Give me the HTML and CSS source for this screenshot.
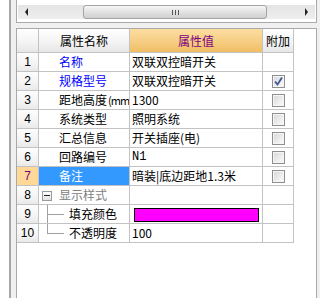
FILE: index.html
```html
<!DOCTYPE html>
<html lang="zh">
<head>
    <meta charset="UTF-8">
    <title>属性</title>
    <link rel="stylesheet" href="styles.css">
</head>
<body>

<div class="frame">
    <div class="toppanel">
        <div class="hscroll">
            <span class="arrow arrow-left"></span>
            <div class="track">
                <div class="thumb"><span class="grip"></span></div>
            </div>
            <span class="arrow arrow-right"></span>
        </div>
    </div>

    <div class="gridpanel">
        <table class="props">
            <colgroup>
                <col class="c-num">
                <col class="c-name">
                <col class="c-val">
                <col class="c-add">
            </colgroup>
            <thead>
                <tr>
                    <th class="num"></th>
                    <th>属性名称</th>
                    <th class="sel">属性值</th>
                    <th>附加</th>
                </tr>
            </thead>
            <tbody>
                <tr>
                    <td class="num">1</td>
                    <td class="name link">名称</td>
                    <td class="val">双联双控暗开关</td>
                    <td class="add"></td>
                </tr>
                <tr>
                    <td class="num">2</td>
                    <td class="name link">规格型号</td>
                    <td class="val">双联双控暗开关</td>
                    <td class="add"><span class="chk checked"><svg width="11" height="11" viewBox="0 0 11 11"><path d="M2 5.5 L4.5 8.5 L9 1.5" fill="none" stroke="#3f5796" stroke-width="1.8"/></svg></span></td>
                </tr>
                <tr>
                    <td class="num">3</td>
                    <td class="name">距地高度<span class="unit">(mm</span></td>
                    <td class="val">1300</td>
                    <td class="add"><span class="chk"></span></td>
                </tr>
                <tr>
                    <td class="num">4</td>
                    <td class="name">系统类型</td>
                    <td class="val">照明系统</td>
                    <td class="add"><span class="chk"></span></td>
                </tr>
                <tr>
                    <td class="num">5</td>
                    <td class="name">汇总信息</td>
                    <td class="val">开关插座(电)</td>
                    <td class="add"><span class="chk"></span></td>
                </tr>
                <tr>
                    <td class="num">6</td>
                    <td class="name">回路编号</td>
                    <td class="val mono">N1</td>
                    <td class="add"><span class="chk"></span></td>
                </tr>
                <tr class="current">
                    <td class="num">7</td>
                    <td class="name">备注</td>
                    <td class="val">暗装|底边距地1.3米</td>
                    <td class="add"><span class="chk"></span></td>
                </tr>
                <tr>
                    <td class="num">8</td>
                    <td class="name group"><span class="minus"></span>显示样式</td>
                    <td class="val"></td>
                    <td class="add"></td>
                </tr>
                <tr>
                    <td class="num">9</td>
                    <td class="name child"><span class="elbow"></span>填充颜色</td>
                    <td class="val"><span class="swatch"></span></td>
                    <td class="add"></td>
                </tr>
                <tr>
                    <td class="num">10</td>
                    <td class="name child"><span class="elbow last"></span>不透明度</td>
                    <td class="val">100</td>
                    <td class="add"></td>
                </tr>
            </tbody>
        </table>
    </div>
</div>

</body>
</html>
```

FILE: styles.css
```css
body {
    margin: 0;
    background: #fff;
    overflow: hidden;
    font-family: "Noto Sans CJK SC", sans-serif;
    font-size: 12px;
    color: #000;
}
.frame {
    margin-left: 9px;
    height: 299px;
    border-left: 2px solid #a7a7a7;
    background: #f0f0f0;
    padding: 0 3px 0 5px;
}
.toppanel {
    margin-top: -1px;
    margin-bottom: 5px;
    height: 22px;
    border: 1px solid #a9a9a9;
    background: #fff;
}
.hscroll {
    display: flex;
    align-items: center;
    margin: 5px 1px 0;
    height: 14px;
    background: linear-gradient(#e4e4e4, #eeeeee);
}
.arrow {
    width: 0;
    height: 0;
    border-top: 4px solid transparent;
    border-bottom: 4px solid transparent;
}
.arrow-left {
    margin: 0 6px 0 7px;
    border-right: 3px solid #222;
}
.arrow-right {
    margin: 0 7px 0 6px;
    border-left: 3px solid #222;
}
.track {
    flex: 1;
    height: 14px;
    padding-left: 49px;
    padding-right: 32px;
}
.thumb {
    height: 12px;
    border: 1px solid #a4a4a4;
    border-radius: 3px;
    background: linear-gradient(#f6f6f6, #dedede 60%, #d0d0d0);
    display: flex;
    justify-content: center;
    align-items: center;
}
.grip {
    width: 5px;
    height: 5px;
    border-left: 1px solid #555;
    border-right: 1px solid #555;
    background: linear-gradient(#555, #555) center / 1px 100% no-repeat;
}
.gridpanel {
    height: 280px;
    border: 1px solid #a9a9a9;
    background: #fff;
}
.props {
    border-collapse: separate;
    border-spacing: 0;
    table-layout: fixed;
    width: 277px;
}
.c-num { width: 22px; }
.c-name { width: 91px; }
.c-val { width: 133px; }
.c-add { width: 31px; }
.props th,
.props td {
    padding: 0;
    border-right: 1px solid #c3c3c3;
    border-bottom: 1px solid #c3c3c3;
    white-space: nowrap;
    overflow: hidden;
    line-height: 18px;
}
.props thead tr {
    height: 24px;
}
.props tbody tr {
    height: 19px;
}
.props th {
    font-weight: normal;
    background: linear-gradient(#ffffff, #f3f3f3 60%, #e6e6e6);
    text-align: center;
}
.props th.sel {
    background: linear-gradient(#fcdea2, #f5cc80 60%, #f0bd63);
    color: #800080;
}
.props td.num {
    text-align: center;
    font-family: "Liberation Sans", sans-serif;
    background: linear-gradient(#fdfdfd, #f4f4f4 60%, #e9e9e9);
}
.name {
    padding-left: 20px !important;
}
.name.link {
    color: #0000ff;
}
.unit {
    margin-left: 1px;
    font-size: 11px;
    letter-spacing: -1px;
}
.val {
    padding-left: 2px !important;
}
.val.mono {
    font-family: "Liberation Mono", monospace;
}
.add {
    text-align: center;
}
.current td.num {
    background: #ffd898;
    color: #800080;
}
.current td.name {
    background: #3399ff;
    color: #fff;
}
.name.group {
    padding-left: 3px !important;
    color: #808080;
}
.minus {
    display: inline-block;
    vertical-align: middle;
    box-sizing: border-box;
    width: 10px;
    height: 10px;
    margin: -2px 7px 0 0;
    border: 1px solid #9a9a9a;
    background:
        linear-gradient(#222, #222) center / 6px 1px no-repeat,
        linear-gradient(#fff, #e2e2e2);
}
.name.child {
    padding-left: 8px !important;
}
.elbow {
    display: inline-block;
    vertical-align: top;
    width: 17px;
    height: 18px;
    margin-right: 5px;
    background:
        linear-gradient(#a0a0a0, #a0a0a0) left top / 1px 100% no-repeat,
        linear-gradient(#a0a0a0, #a0a0a0) left 9px / 100% 1px no-repeat;
}
.elbow.last {
    background:
        linear-gradient(#a0a0a0, #a0a0a0) left top / 1px 10px no-repeat,
        linear-gradient(#a0a0a0, #a0a0a0) left 9px / 100% 1px no-repeat;
}
.swatch {
    display: inline-block;
    vertical-align: middle;
    box-sizing: border-box;
    width: 125px;
    height: 14px;
    margin: -2px 0 0 2px;
    border: 1px solid #000;
    background: #ff00ff;
}
.chk {
    display: inline-block;
    vertical-align: middle;
    box-sizing: border-box;
    width: 13px;
    height: 13px;
    margin-top: -2px;
    border: 1px solid #8e8f8f;
    background: linear-gradient(135deg, #d6d6d6, #f2f2f2 70%, #fbfbfb);
    box-shadow: inset 0 0 0 1px #f6f6f6;
}
.chk svg {
    display: block;
}
```
